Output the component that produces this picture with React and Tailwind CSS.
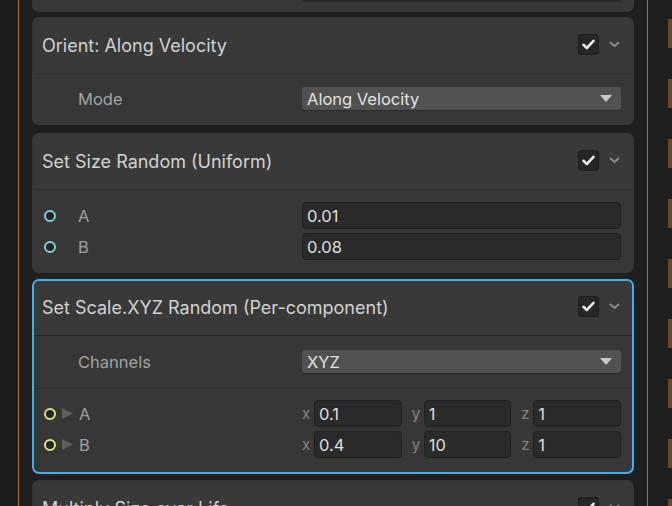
import React from 'react';

function Check() {
  return (
    <div className="w-[21px] h-[21px] rounded-[3px] bg-[#262626] border border-[#1d1d1d] flex items-center justify-center">
      <svg width="15" height="15" viewBox="0 0 15 15">
        <polyline points="2.5,7.8 5.8,11 12.5,3.8" fill="none" stroke="#e8e8e8" strokeWidth="2.6" strokeLinecap="round" strokeLinejoin="round" />
      </svg>
    </div>
  );
}

function Chevron() {
  return (
    <svg width="11" height="7" viewBox="0 0 11 7">
      <polyline points="1.5,1.5 5.5,5 9.5,1.5" fill="none" stroke="#8e8e8e" strokeWidth="1.8" strokeLinecap="round" strokeLinejoin="round" />
    </svg>
  );
}

function Card({ title, selected, className, children }) {
  return (
    <div
      className={`rounded-[7px] border-2 overflow-hidden bg-[#373737] shrink-0 ${selected ? 'border-[#3db2f0]' : 'border-transparent'} ${className}`}
    >
      <div className="h-[55px] flex items-center pl-[8px] pr-[12px] border-b border-[#2b2b2b] bg-[#393939]">
        <span className="text-[18px] leading-[22px] text-[#d2d2d2]">{title}</span>
        <div className="ml-auto flex items-center gap-[10px] -mt-[3px]">
          <Check />
          <Chevron />
        </div>
      </div>
      {children}
    </div>
  );
}

function Dropdown({ value }) {
  return (
    <div className="ml-auto w-[319px] h-[23px] rounded-[3px] bg-[#515151] shadow-[0_1px_0_#2a2a2a] flex items-center pl-[5px] pr-[9px]">
      <span className="text-[16.5px] leading-[20px] text-[#e2e2e2]">{value}</span>
      <svg className="ml-auto" width="12" height="7" viewBox="0 0 12 7">
        <polygon points="0,0 12,0 6,7" fill="#c8c8c8" />
      </svg>
    </div>
  );
}

function Field({ value, className }) {
  return (
    <div className={`h-[27px] rounded-[4px] bg-[#2a2a2a] border border-[#202020] flex items-center pl-[4px] text-[16.5px] leading-[20px] text-[#dedede] ${className}`}>
      {value}
    </div>
  );
}

function Port({ color }) {
  return <div className={`w-[12px] h-[12px] rounded-full border-2 bg-[#242424] shrink-0 ${color}`} />;
}

function Arrow() {
  return (
    <svg width="11" height="11" viewBox="0 0 11 11" className="ml-[6px] shrink-0">
      <polygon points="0,0 11,5.5 0,11" fill="#5e5e5e" />
    </svg>
  );
}

export default function App() {
  const vectors = [
    { label: 'A', v: ['0.1', '1', '1'] },
    { label: 'B', v: ['0.4', '10', '1'] },
  ];
  const blocks = [0, 1, 2, 3, 4, 5, 6, 7, 8];

  return (
    <div className="w-[672px] h-[506px] overflow-hidden bg-[#1f1f1f] flex font-[Inter,'Noto_Sans',sans-serif]">
      <div className="w-[18px] bg-[#1c1c1c]" />
      <div className="w-px bg-[#b8711c]" />

      <div className="w-[628px] px-[13px] flex flex-col">
        {/* bottom of the previous block */}
        <div className="h-[12px] shrink-0 rounded-b-[7px] bg-[#373737] flex pr-[13px]">
          <div className="ml-auto w-[319px] h-[2px] rounded-b-[3px] bg-[#2a2a2a]" />
        </div>

        <Card title="Orient: Along Velocity" className="mt-[5px]">
          <div className="flex items-center pt-[13px] pb-[13px] pl-[44px] pr-[11px]">
            <span className="text-[16.5px] leading-[20px] text-[#a3a3a3]">Mode</span>
            <Dropdown value="Along Velocity" />
          </div>
        </Card>

        <Card title="Set Size Random (Uniform)" className="mt-[8px]">
          <div className="flex flex-col gap-[4px] pt-[12px] pb-[11px] pl-[10px] pr-[11px]">
            {[
              ['A', '0.01'],
              ['B', '0.08'],
            ].map(([l, v]) => (
              <div key={l} className="flex items-center">
                <Port color="border-[#7dd4de]" />
                <span className="ml-[22px] text-[16.5px] leading-[20px] text-[#a0a0a0]">{l}</span>
                <Field value={v} className="ml-auto w-[319px]" />
              </div>
            ))}
          </div>
        </Card>

        <Card title="Set Scale.XYZ Random (Per-component)" selected className="mt-[6px]">
          <div className="flex items-center pt-[14px] pb-[15px] pl-[44px] pr-[11px] border-b border-[#2b2b2b]">
            <span className="text-[16.5px] leading-[20px] text-[#a3a3a3]">Channels</span>
            <Dropdown value="XYZ" />
          </div>
          <div className="flex flex-col gap-[4px] pt-[11px] pb-[14px] pl-[10px] pr-[11px]">
            {vectors.map((row) => (
              <div key={row.label} className="flex items-center">
                <Port color="border-[#e4e47c]" />
                <Arrow />
                <span className="ml-[6px] text-[16.5px] leading-[20px] text-[#a0a0a0]">{row.label}</span>
                <div className="ml-auto w-[319px] flex gap-[10px]">
                  {['x', 'y', 'z'].map((axis, i) => (
                    <div key={axis} className="flex-1 flex items-center">
                      <span className="w-[12px] text-[15px] leading-[20px] text-[#858585]">{axis}</span>
                      <Field value={row.v[i]} className="flex-1" />
                    </div>
                  ))}
                </div>
              </div>
            ))}
          </div>
        </Card>

        <Card title="Multiply Size over Life" className="mt-[6px]" />
      </div>

      <div className="w-px bg-[#b8711c]" />
      <div className="flex-1 flex flex-col items-end gap-[31px] pt-[19px]">
        {blocks.map((b) => (
          <div key={b} className="w-[4px] h-[29px] shrink-0 bg-[#6c4526]" />
        ))}
      </div>
    </div>
  );
}
